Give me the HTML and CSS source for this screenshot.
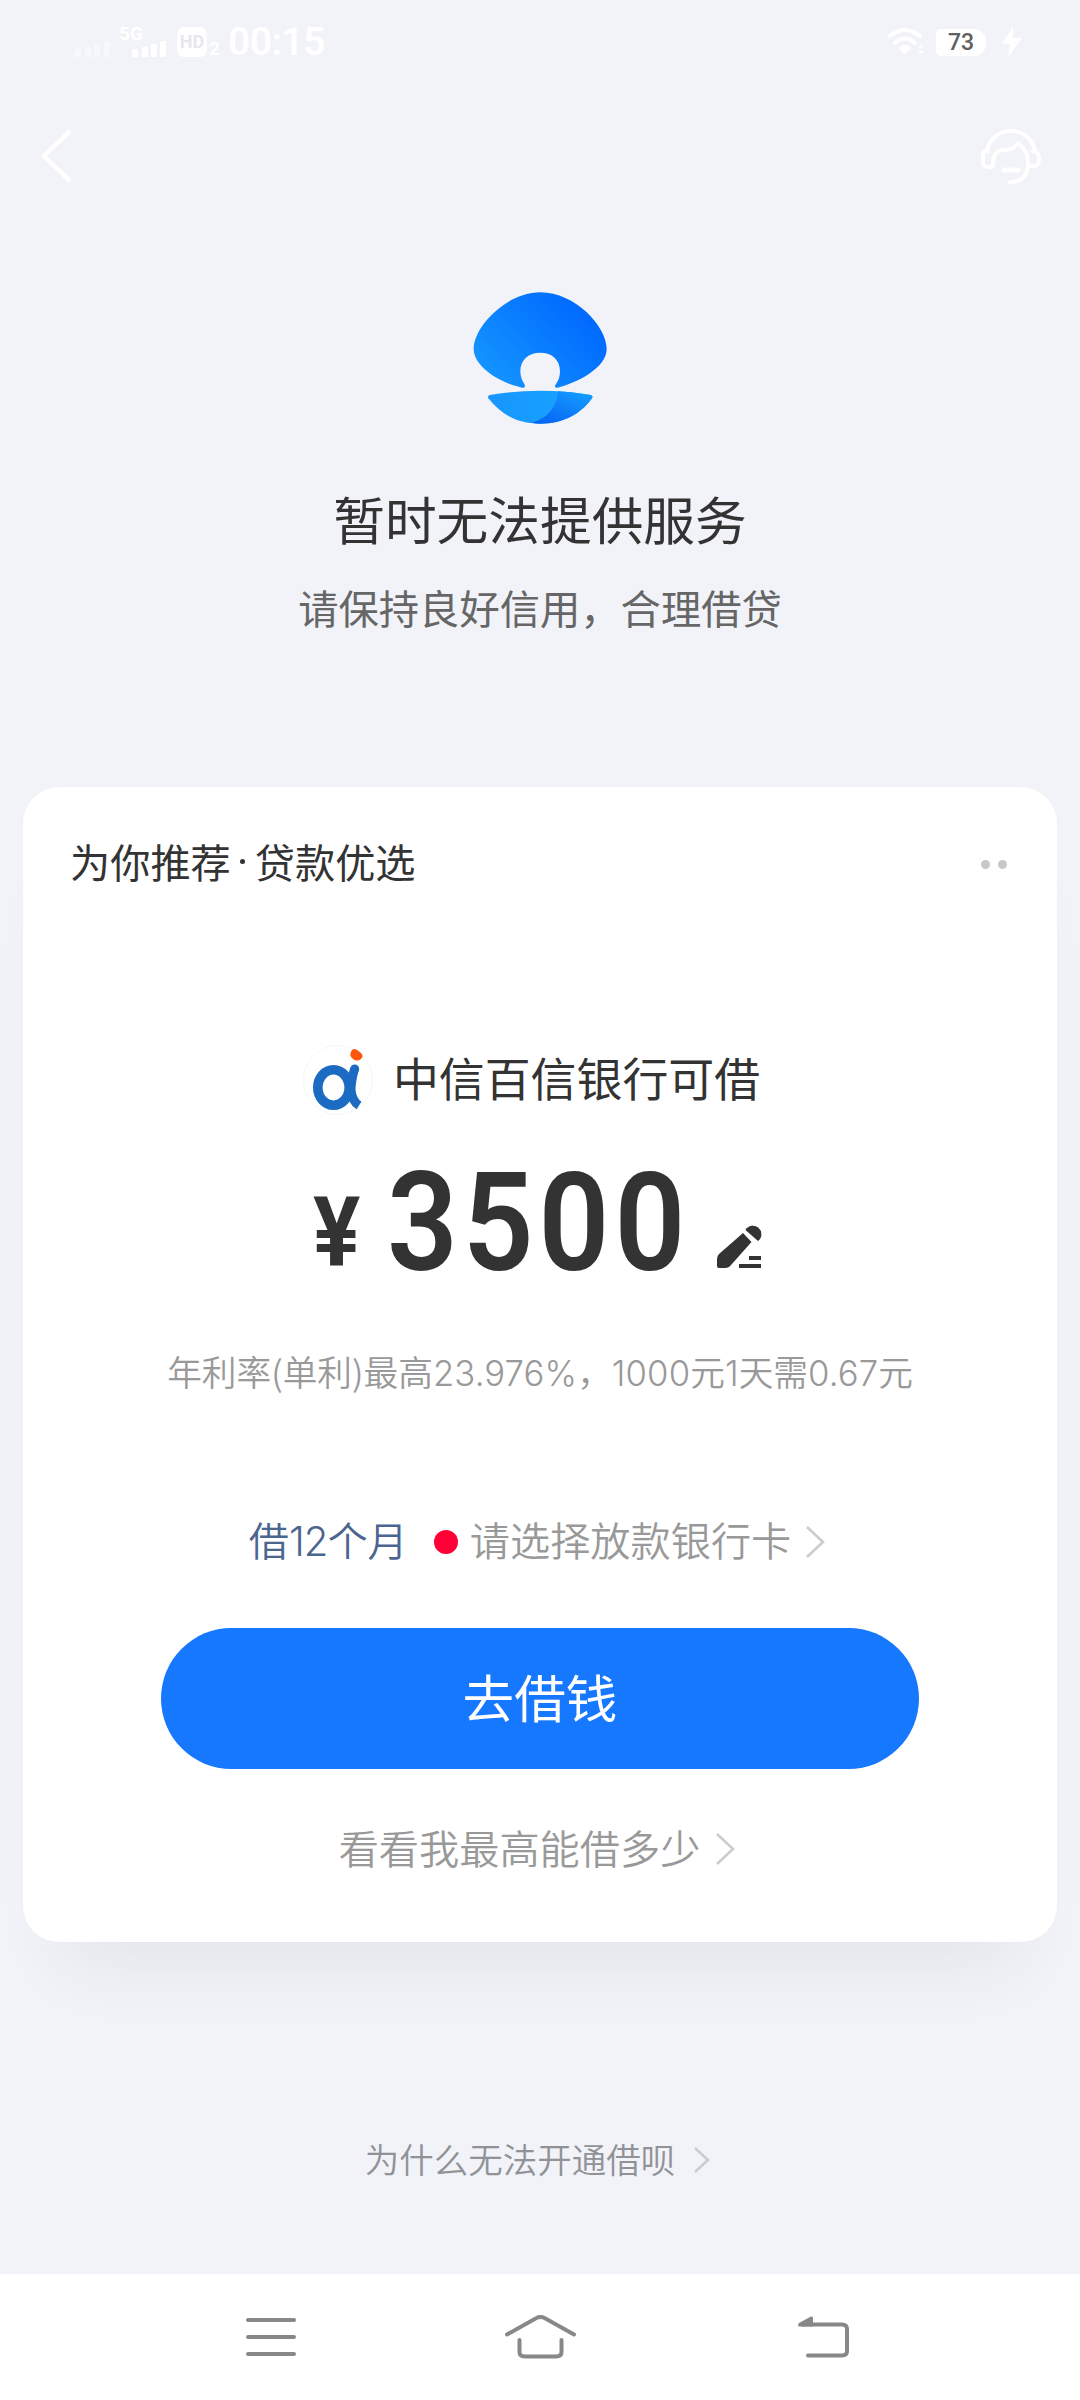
FILE: index.html
```html
<!DOCTYPE html>
<html lang="zh-CN">
<head>
<meta charset="utf-8">
<title>借呗</title>
<link rel="stylesheet" href="styles.css">
</head>
<body>
<div class="screen">
  <header class="status">
    <div class="status-left">
      <svg class="signals" width="94" height="56" viewBox="0 -12 94 56">
        <g fill="#f6f8fb"><rect x="3" y="22" width="6" height="8" rx="1"/><rect x="13" y="20" width="6" height="10" rx="1"/><rect x="22" y="17" width="6" height="13" rx="1"/><rect x="32" y="14" width="6" height="16" rx="1"/></g>
        <g fill="#fff"><rect x="60" y="22" width="6" height="8" rx="1"/><rect x="70" y="20" width="6" height="10" rx="1"/><rect x="79" y="17" width="6" height="13" rx="1"/><rect x="88" y="14" width="6" height="16" rx="1"/></g>
        <text class="net" x="47" y="13">5G</text>
      </svg>
      <span class="hd">HD</span><span class="sim">2</span>
      <span class="clock">00:15</span>
    </div>
    <div class="status-right">
      <svg class="wifi" width="40" height="30" viewBox="0 0 40 30" fill="none" stroke="#fff" stroke-width="4" stroke-linecap="round">
        <path d="M3 9Q18-3 33 9M8 16Q18 7 28 16"/><path d="M13 21Q18 17 23 21L18 26Z" fill="#fff" stroke-width="2"/>
        <path d="M31 20.500l3-3 3 3zM31 24l3 3 3-3z" fill="#fff" stroke="none"/>
      </svg>
      <span class="battery">73</span>
      <svg width="22" height="30" viewBox="0 0 22 30"><path d="M12 0L1 17H9L7 30 21 11H12Z" fill="#fff"/></svg>
    </div>
  </header>

  <nav class="topbar">
    <svg width="34" height="56" viewBox="0 0 34 56" fill="none" stroke="#fff" stroke-width="4.500" stroke-linecap="round" stroke-linejoin="round"><path d="M30 4L5 28 30 52"/></svg>
    <svg width="62" height="58" viewBox="0 0 62 58" fill="none" stroke="#fff" stroke-width="4" stroke-linecap="round" stroke-linejoin="round">
      <path d="M7 23C9 11 19 3 31 3S53 11 55 23"/>
      <path d="M8 23H6Q3 23 3 27V34Q3 39 9 39H11Q13 39 13 35C13 26 18 22 24 22C31 22 35 20 38 15C43 19 48 25 48 34C48 47 42 54 30 54"/>
      <path d="M53 23H55Q59 25 59 31T55 38H49"/><path d="M24 42H38" stroke-width="5"/>
    </svg>
  </nav>

  <main class="content">
    <section class="hero">
      <svg class="shell" width="134" height="132" viewBox="99 67 402 396">
        <defs>
          <linearGradient id="top" x1="0" y1=".75" x2=".85" y2=".2"><stop offset="0" stop-color="#1495ff"/><stop offset="1" stop-color="#0069ff"/></linearGradient>
          <linearGradient id="base" x1="0" y1="0" x2="1" y2="0"><stop offset="0" stop-color="#1796ff"/><stop offset="1" stop-color="#18a4ff"/></linearGradient>
          <linearGradient id="fold" x1="0" y1="1" x2=".8" y2="0"><stop offset="0" stop-color="#0560f4"/><stop offset="1" stop-color="#149bff"/></linearGradient>
        </defs>
        <path fill="url(#top)" d="M301 68C405 68 500 170 500 238C500 295 410 340 352 354C344 354 343 349 348 343C356 333 360 320 360 305C360 270 336 249 301 249S241 270 241 305C241 320 246 333 253 343C257 350 254 355 246 354C190 343 101 295 101 238C101 170 200 68 301 68Z"/>
        <path fill="url(#base)" d="M149 376Q300 350 452 376Q460 379 456 386C420 435 370 462 300 462S185 435 145 386Q142 378 149 376Z"/>
        <path fill="url(#fold)" d="M354 365Q400 367 452 376Q460 379 456 386C420 435 370 462 300 462Q288 462 276 459C322 446 350 415 354 365Z"/>
      </svg>
      <h1>暂时无法提供服务</h1>
      <p>请保持良好信用，合理借贷</p>
    </section>

    <section class="card">
      <div class="card-head">
        <h2>为你推荐<i class="sep"></i>贷款优选</h2>
        <span class="more"><i></i><i></i></span>
      </div>
      <div class="bank">
        <svg width="72" height="72" viewBox="0 0 72 72">
          <circle cx="36" cy="36" r="34.500" fill="#fff" stroke="#f3f6fa"/>
          <ellipse cx="31.500" cy="43.500" rx="15.700" ry="17.700" fill="none" stroke="#1c6bc2" stroke-width="9.600"/>
          <path d="M52.500 25Q49 37 49 46Q50 57 57 61.500" fill="none" stroke="#1c6bc2" stroke-width="9"/>
          <circle cx="52.700" cy="25" r="4.500" fill="#1c6bc2"/>
          <path d="M50 6Q52 4 55 6L59 9Q62 12 59 15Q55 18 51 15Q46 11 50 6Z" fill="#fc560c"/>
        </svg>
        <span>中信百信银行可借</span>
      </div>
      <div class="amount">
        <span class="yen">¥</span><span class="sum">3500</span>
        <svg width="45" height="44" viewBox="0 0 45 44" fill="#333">
          <path d="M26 8L34.500 17 14 40Q12 43 8 43H2Q0 43 0 41V34Q0 31 2 29Z"/><path d="M28.500 5A8.500 8.500 0 1 1 41 16Z"/>
          <rect x="32" y="31" width="12" height="4"/><rect x="22" y="39" width="22" height="4"/>
        </svg>
      </div>
      <p class="rate">年利率(单利)最高<b>23.976%</b>，<b>1000</b>元<b>1</b>天需<b>0.67</b>元</p>
      <div class="terms">
        <span class="months">借<b>12</b>个月</span><i class="dot"></i><span>请选择放款银行卡</span>
        <svg width="20" height="32" viewBox="0 0 20 32"><path d="M2 1L18 16 2 31"/></svg>
      </div>
      <button class="borrow">去借钱</button>
      <div class="link">
        <span>看看我最高能借多少</span>
        <svg width="20" height="32" viewBox="0 0 20 32"><path d="M2 1L18 16 2 31"/></svg>
      </div>
    </section>

    <div class="why">
      <span>为什么无法开通借呗</span>
      <svg width="17" height="26" viewBox="0 0 17 26"><path d="M2 1L15 13 2 25"/></svg>
    </div>
  </main>

  <footer class="navbar">
    <svg width="50" height="40" viewBox="0 0 50 40"><path d="M2 3H48M2 20H48M2 37H48"/></svg>
    <svg class="home" width="71" height="44" viewBox="0 0 71 44"><path d="M2 19.500L31 3.200Q35.500 1 40 3.200L69 19.500M14.500 25V37Q14.500 41.500 20 41.500H51Q56.500 41.500 56.500 37V25"/></svg>
    <svg width="52" height="42" viewBox="0 0 52 42"><path d="M4 8.500H44Q49 8.500 49 13V35Q49 39.500 44 39.500H10"/><path class="tip" d="M0 9.500Q0 8 1 7L13 .5Q15 0 15 2V10.500H2Q0 10.500 0 9.500Z"/></svg>
  </footer>
</div>
</body>
</html>
```

FILE: styles.css
```css
* { box-sizing: border-box; margin: 0; padding: 0; }
body {
  background: #f1f3f8;
  color: #333;
  font-family: "Noto Sans CJK SC", sans-serif;
}
svg { display: block; flex: none; }
i, b { font-style: normal; font-weight: inherit; }
.screen { width: 1080px; height: 2400px; display: flex; flex-direction: column; overflow: hidden; }

.status { height: 84px; display: flex; justify-content: space-between; padding: 0 57px 0 72px; color: #fff; font-family: Roboto, sans-serif; }
.status-left { display: flex; align-items: center; }
.signals { margin-top: 2px; }
.net { font: 700 19px Roboto, sans-serif; fill: #fff; }
.hd { width: 30px; height: 30px; margin-left: 11px; border-radius: 7px; background: #fff; color: #e6e8ee; font: 700 18px/30px Roboto, sans-serif; text-align: center; }
.sim { margin: 14px 0 0 2px; font: 700 19px/20px Roboto, sans-serif; }
.clock { margin-left: 8px; font: 600 39px/84px Roboto, sans-serif; letter-spacing: -.5px; }
.status-right { display: flex; align-items: center; }
.battery { width: 50px; height: 27px; margin: 0 15px 0 9px; border-radius: 5px 12px 12px 5px; background: #fff; color: #606060; font: 500 23px/28px Roboto, sans-serif; text-align: center; }

.topbar { height: 144px; display: flex; justify-content: space-between; padding: 44px 38px 0 39px; }

.content { flex: 1; display: flex; flex-direction: column; }
.hero { height: 559px; padding-top: 64px; display: flex; flex-direction: column; align-items: center; }
.hero h1 { margin-top: 64px; font-size: 51.7px; font-weight: 400; line-height: 60px; }
.hero p { margin-top: 29px; color: #666; font-size: 40.3px; font-weight: 400; line-height: 60px; }

.card {
  height: 1155px; margin: 0 23px; border-radius: 36px; background: #fff;
  box-shadow: 0 60px 66px -40px rgba(60, 60, 60, .075);
  display: flex; flex-direction: column; align-items: center;
}
.card-head { align-self: stretch; height: 150px; padding: 0 50px 0 47px; display: flex; align-items: center; justify-content: space-between; }
.card-head h2 { padding-bottom: 2px; display: flex; align-items: center; font-size: 40.2px; font-weight: 400; line-height: 60px; }
.sep { width: 5px; height: 5px; margin: 0 10px 0 9px; border-radius: 50%; background: #333; }
.more { display: flex; gap: 8px; padding-top: 5px; }
.more i { width: 9px; height: 9px; border-radius: 50%; background: #c8c8c8; }
.bank { height: 72px; margin: 107px 18px 0 0; display: flex; align-items: center; gap: 19px; font-size: 45.9px; }
.bank span { line-height: 72px; padding-bottom: 8px; }
.amount { height: 120px; margin: 47px 5px 0 0; display: flex; align-items: flex-end; font-family: Roboto, sans-serif; }
.yen { width: 74px; height: 106px; font-size: 96px; font-weight: 700; line-height: 110px; transform: scaleX(.92); transform-origin: left; }
.sum { width: 330px; font-size: 137px; font-weight: 600; line-height: 120px; letter-spacing: 5.5px; transform: scaleX(.905); transform-origin: left; }
.amount svg { margin-bottom: 14px; }
.rate { margin-top: 58px; color: #999; font-size: 34.7px; line-height: 60px; white-space: nowrap; font-weight: 350; }
.rate b { font-family: Inter, sans-serif; letter-spacing: .1px; }
.terms, .link, .why { display: flex; align-items: center; justify-content: center; color: #999; font-size: 40.2px; line-height: 60px; font-weight: 350; }
.terms span, .link span, .why span { margin-top: -3px; }
.terms { margin: 108px 6px 0 0; }
.terms svg, .link svg, .why svg { fill: none; stroke: #ccc; stroke-width: 2.6px; margin-left: 15px; }
.terms span { margin-top: -5px; }
.terms svg { margin-left: 14px; }
.months { color: #4a6590; }
.terms .months { margin-top: -2px; }
.months b { font-family: Inter, sans-serif; letter-spacing: -1px; }
.dot { width: 24px; height: 24px; margin: 0 12px 0 26px; border-radius: 50%; background: #ff0036; }
.borrow { width: 758px; height: 141px; margin-top: 56px; padding-bottom: 6px; border: 0; border-radius: 71px; background: #1677ff; color: #fff; font: 400 51.6px/135px "Noto Sans CJK SC", sans-serif; }
.link { margin: 51px 6px 0 0; }
.why { margin: 189px 5px 0 0; color: #909296; font-size: 34.5px; }
.why svg { margin-left: 18px; }

.navbar { height: 126px; background: #fff; display: flex; align-items: center; padding-left: 246px; }
.navbar svg { fill: none; stroke: #888; stroke-width: 4px; stroke-linecap: round; }
.navbar .home { margin: 0 222px 0 209px; }
.navbar .tip { fill: #888; stroke: none; }
```
